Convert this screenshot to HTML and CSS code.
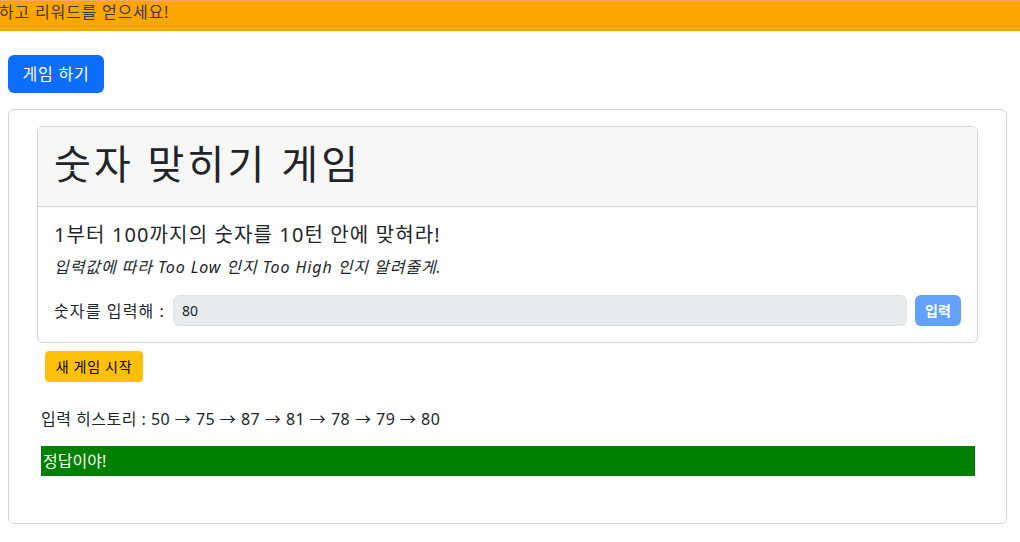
FILE: index.html
```html
<!DOCTYPE html>
<html lang="ko">
<head>
<meta charset="utf-8">
<title>숫자 맞히기 게임</title>
<link rel="stylesheet" href="styles.css">
</head>
<body>
<div class="banner"><span class="banner-text">하고 리워드를 얻으세요!</span></div>
<div class="page">
  <button class="btn btn-primary">게임 하기</button>
  <div class="outer-card">
    <div class="card">
      <div class="card-header"><h1 class="title">숫자 맞히기 게임</h1></div>
      <div class="card-body">
        <h5 class="lead">1부터 100까지의 숫자를 10턴 안에 맞혀라!</h5>
        <p class="hint">입력값에 따라 Too Low 인지 Too High 인지 알려줄게.</p>
        <div class="input-row">
          <label class="label">숫자를 입력해 :</label>
          <input class="input" type="text" value="80" disabled>
          <button class="btn btn-sm btn-submit" disabled>입력</button>
        </div>
      </div>
    </div>
    <div class="actions"><button class="btn btn-sm btn-warning">새 게임 시작</button></div>
    <div class="history">입력 히스토리 : 50 → 75 → 87 → 81 → 78 → 79 → 80</div>
    <div class="result">정답이야!</div>
  </div>
</div>
</body>
</html>
```
FILE: styles.css
```css
* { box-sizing: border-box; }
body {
  margin: 0;
  font-family: "Noto Sans", "Noto Sans CJK KR", sans-serif;
  font-size: 16px;
  line-height: 1.5;
  color: #212529;
  background: #fff;
}
.banner {
  height: 31px;
  background: #ffa500;
  border-top: 1px solid #f6a86a;
  overflow: hidden;
  white-space: nowrap;
  color: #3a3a3a;
  line-height: 22px;
  letter-spacing: 0.05em;
}
.banner-text { display: inline-block; margin-left: -1px; }
.page { padding: 24px 13px 0 8px; }
.btn {
  font-family: inherit;
  border: 1px solid transparent;
  border-radius: 6px;
  cursor: pointer;
  line-height: 1.5;
}
.btn-primary {
  background: #0d6efd;
  color: #fff;
  font-size: 16px;
  padding: 6px 8px;
  height: 38px;
  width: 96px;
  letter-spacing: 0.05em;
}
.btn-sm { font-size: 14px; padding: 4px 6px; border-radius: 4px; height: 31px; }
.outer-card {
  margin-top: 16px;
  border: 1px solid #d3d3d3;
  border-radius: 6px;
  padding: 16px 28px 47px;
}
.card {
  border: 1px solid #d3d3d3;
  border-radius: 6px;
  overflow: hidden;
}
.card-header {
  background: #f7f7f7;
  border-bottom: 1px solid #d3d3d3;
  padding: 8px 16px;
}
.title {
  margin: 0 0 8px;
  font-size: 40px;
  font-weight: 400;
  line-height: 53px;
  padding-top: 2px;
  letter-spacing: 0.08em;
}
.card-body { padding: 16px; }
.lead {
  margin: 0 0 8px;
  font-size: 20px;
  font-weight: 400;
  line-height: 24px;
  letter-spacing: 0.056em;
}
.hint {
  margin: 0 0 16px;
  font-style: italic;
  line-height: 24px;
  letter-spacing: 0.057em;
}
.input-row { display: flex; align-items: center; gap: 8px; }
.label { white-space: nowrap; letter-spacing: 0.07em; }
.input {
  flex: 1;
  min-width: 0;
  height: 31px;
  font-family: inherit;
  font-size: 14px;
  padding: 4px 8px;
  border: 1px solid #dee2e6;
  border-radius: 6px;
  background: #e9ecef;
  color: #212529;
}
.btn-submit {
  background: #62a1fd;
  color: #fff;
  font-weight: 700;
  width: 46px;
  border-radius: 6px;
}
.actions { margin: 8px 0 0 8px; }
.btn-warning {
  background: #ffc107;
  color: #000;
  width: 98px;
  letter-spacing: 0.05em;
}
.history { margin: 25px 4px 0; line-height: 24px; letter-spacing: 0.03em; }
.result {
  margin: 15px 3px 0 4px;
  background: #008000;
  color: #fff;
  font-weight: 400;
  height: 30px;
  padding: 3px 2px;
  line-height: 24px;
}
```
